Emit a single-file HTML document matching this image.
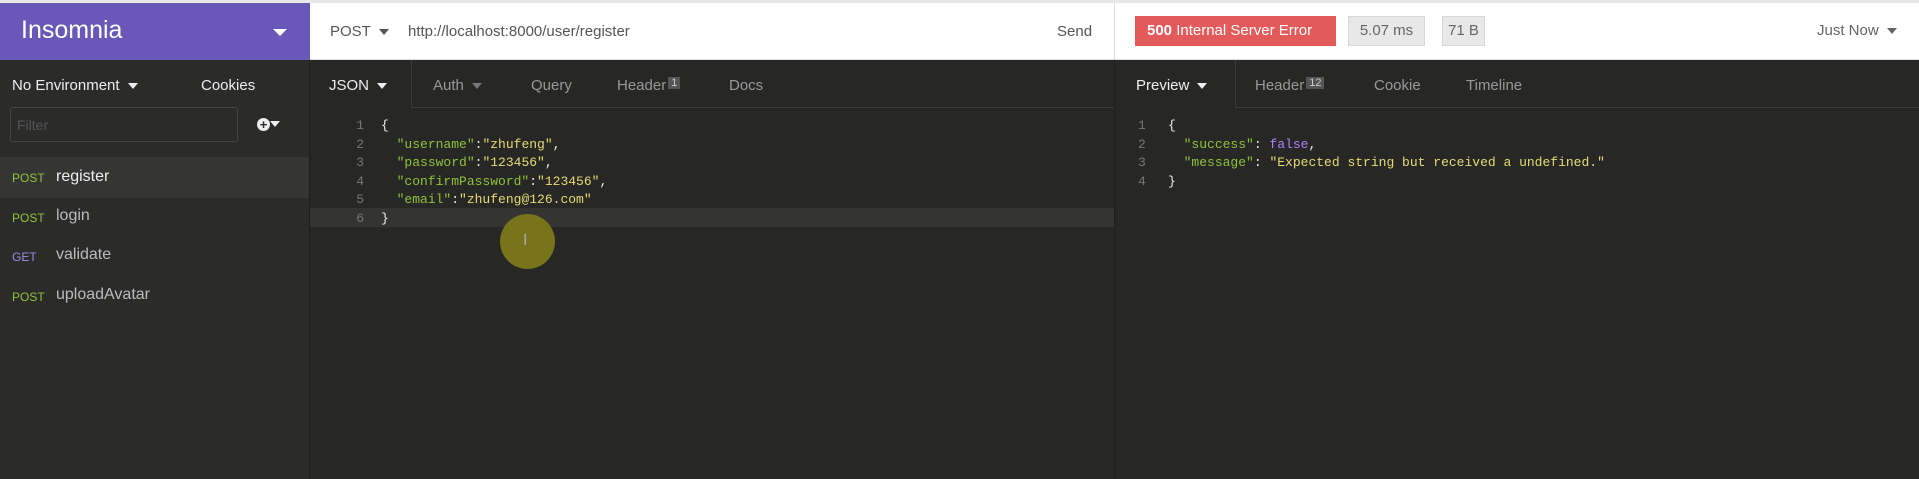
<!DOCTYPE html>
<html><head><meta charset="utf-8"><style>
*{margin:0;padding:0;box-sizing:border-box}
body{width:1919px;height:479px;overflow:hidden;background:#272725;font-family:"Liberation Sans",sans-serif;position:relative}
.a{position:absolute;white-space:nowrap}
.mono{font-family:"Liberation Mono",monospace;font-size:13px}
.tri{display:inline-block;width:0;height:0;border-left:5px solid transparent;border-right:5px solid transparent;border-top:6px solid currentColor;vertical-align:middle;margin-left:8px}
.g{color:#8fc33a}.y{color:#e6db74}.w{color:#f0f0f0}.n{color:#777}.p{color:#ae81ff}
</style></head><body>
<div class="a" style="left:0;top:0;width:1919px;height:3px;background:#e8e8e8"></div>
<div class="a" style="left:0;top:3px;width:310px;height:57px;background:#6a58b9"></div>
<div class="a" style="left:21px;top:16px;font-size:25px;color:#fff">Insomnia</div>
<div class="a" style="left:273px;top:29px;border-left:7px solid transparent;border-right:7px solid transparent;border-top:7px solid #fff"></div>
<div class="a" style="left:310px;top:3px;width:1609px;height:57px;background:#fff;border-bottom:1px solid #ddd"></div>
<div class="a" style="left:1114px;top:3px;width:1px;height:57px;background:#ddd"></div>
<div class="a" style="left:330px;top:23px;font-size:15px;color:#555">POST<span class="tri" style="color:#555"></span></div>
<div class="a" style="left:408px;top:23px;font-size:15px;color:#555">http://localhost:8000/user/register</div>
<div class="a" style="left:1057px;top:23px;font-size:15px;color:#555">Send</div>
<div class="a" style="left:1135px;top:16px;width:201px;height:30px;background:#e35a5a;color:#fff;font-size:15px;line-height:30px;padding-left:12px"><b>500</b> Internal Server Error</div>
<div class="a" style="left:1348px;top:16px;width:77px;height:30px;background:#e8e8e8;border:1px solid #d8d8d8;color:#666;font-size:15px;line-height:28px;text-align:center">5.07 ms</div>
<div class="a" style="left:1442px;top:16px;width:43px;height:30px;background:#e8e8e8;border:1px solid #d8d8d8;color:#666;font-size:15px;line-height:28px;text-align:center">71 B</div>
<div class="a" style="left:1817px;top:22px;font-size:15px;color:#666">Just Now<span class="tri" style="color:#666"></span></div>
<!-- sidebar -->
<div class="a" style="left:0;top:60px;width:310px;height:419px;background:#2b2b2a;border-right:1px solid #1e1e1e"></div>
<div class="a" style="left:12px;top:77px;font-size:15px;color:#eee">No Environment<span class="tri" style="color:#eee"></span></div>
<div class="a" style="left:201px;top:77px;font-size:15px;color:#eee">Cookies</div>
<div class="a" style="left:10px;top:107px;width:228px;height:35px;border:1px solid #444;border-radius:3px"></div>
<div class="a" style="left:17px;top:117px;font-size:14px;color:#555">Filter</div>
<div class="a" style="left:257px;top:118px;width:13px;height:13px;border-radius:50%;background:#eee;color:#2b2b2a;font-size:13px;line-height:13px;text-align:center;font-weight:bold">+</div>
<div class="a" style="left:270px;top:121px;border-left:5px solid transparent;border-right:5px solid transparent;border-top:6px solid #eee"></div>
<div class="a" style="left:0;top:157px;width:309px;height:41px;background:#353534"></div>
<div class="a" style="left:12px;top:171px;font-size:12px" ><span class="g">POST</span></div>
<div class="a" style="left:56px;top:168px;font-size:16px;color:#eee">register</div>
<div class="a" style="left:12px;top:211px;font-size:12px"><span class="g">POST</span></div>
<div class="a" style="left:56px;top:207px;font-size:16px;color:#bbb">login</div>
<div class="a" style="left:12px;top:250px;font-size:12px;color:#9b8ee8">GET</div>
<div class="a" style="left:56px;top:246px;font-size:16px;color:#bbb">validate</div>
<div class="a" style="left:12px;top:290px;font-size:12px"><span class="g">POST</span></div>
<div class="a" style="left:56px;top:286px;font-size:16px;color:#bbb">uploadAvatar</div>
<!-- request tabs -->
<div class="a" style="left:411px;top:60px;width:703px;height:48px;border-left:1px solid #3c3c3c;border-bottom:1px solid #3c3c3c"></div>
<div class="a" style="left:1114px;top:60px;width:1px;height:419px;background:#1e1e1e"></div>
<div class="a" style="left:329px;top:77px;font-size:15px;color:#eee">JSON<span class="tri" style="color:#eee"></span></div>
<div class="a" style="left:433px;top:77px;font-size:15px;color:#999">Auth<span class="tri" style="color:#777"></span></div>
<div class="a" style="left:531px;top:77px;font-size:15px;color:#999">Query</div>
<div class="a" style="left:617px;top:77px;font-size:15px;color:#999">Header<span style="display:inline-block;background:#555;color:#ccc;font-size:11px;padding:0 3px;margin-left:2px;vertical-align:top">1</span></div>
<div class="a" style="left:729px;top:77px;font-size:15px;color:#999">Docs</div>
<div class="a" style="left:310px;top:208px;width:804px;height:19px;background:#343432"></div>
<div class="a mono" style="left:350px;top:117px;line-height:18.6px;color:#777;text-align:right;width:14px">1<br>2<br>3<br>4<br>5<br>6</div>
<div class="a mono" style="left:381px;top:117px;line-height:18.6px;color:#f0f0f0">{<br>&nbsp;&nbsp;<span class="g">"username"</span>:<span class="y">"zhufeng"</span>,<br>&nbsp;&nbsp;<span class="g">"password"</span>:<span class="y">"123456"</span>,<br>&nbsp;&nbsp;<span class="g">"confirmPassword"</span>:<span class="y">"123456"</span>,<br>&nbsp;&nbsp;<span class="g">"email"</span>:<span class="y">"zhufeng@126.com"</span><br>}</div>
<div class="a" style="left:500px;top:214px;width:55px;height:55px;border-radius:50%;background:#77741a"></div>
<div class="a" style="left:523px;top:232px;color:#aab;font-size:16px">I</div>
<!-- response tabs -->
<div class="a" style="left:1235px;top:60px;width:684px;height:48px;border-left:1px solid #3c3c3c;border-bottom:1px solid #3c3c3c"></div>
<div class="a" style="left:1136px;top:77px;font-size:15px;color:#eee">Preview<span class="tri" style="color:#eee"></span></div>
<div class="a" style="left:1255px;top:77px;font-size:15px;color:#999">Header<span style="display:inline-block;background:#555;color:#ccc;font-size:11px;padding:0 3px;margin-left:2px;vertical-align:top">12</span></div>
<div class="a" style="left:1374px;top:77px;font-size:15px;color:#999">Cookie</div>
<div class="a" style="left:1466px;top:77px;font-size:15px;color:#999">Timeline</div>
<div class="a mono" style="left:1138px;top:117px;line-height:18.6px;color:#777">1<br>2<br>3<br>4</div>
<div class="a mono" style="left:1168px;top:117px;line-height:18.6px;color:#f0f0f0">{<br>&nbsp;&nbsp;<span class="g">"success"</span>: <span class="p">false</span>,<br>&nbsp;&nbsp;<span class="g">"message"</span>: <span class="y">"Expected string but received a undefined."</span><br>}</div>
</body></html>
